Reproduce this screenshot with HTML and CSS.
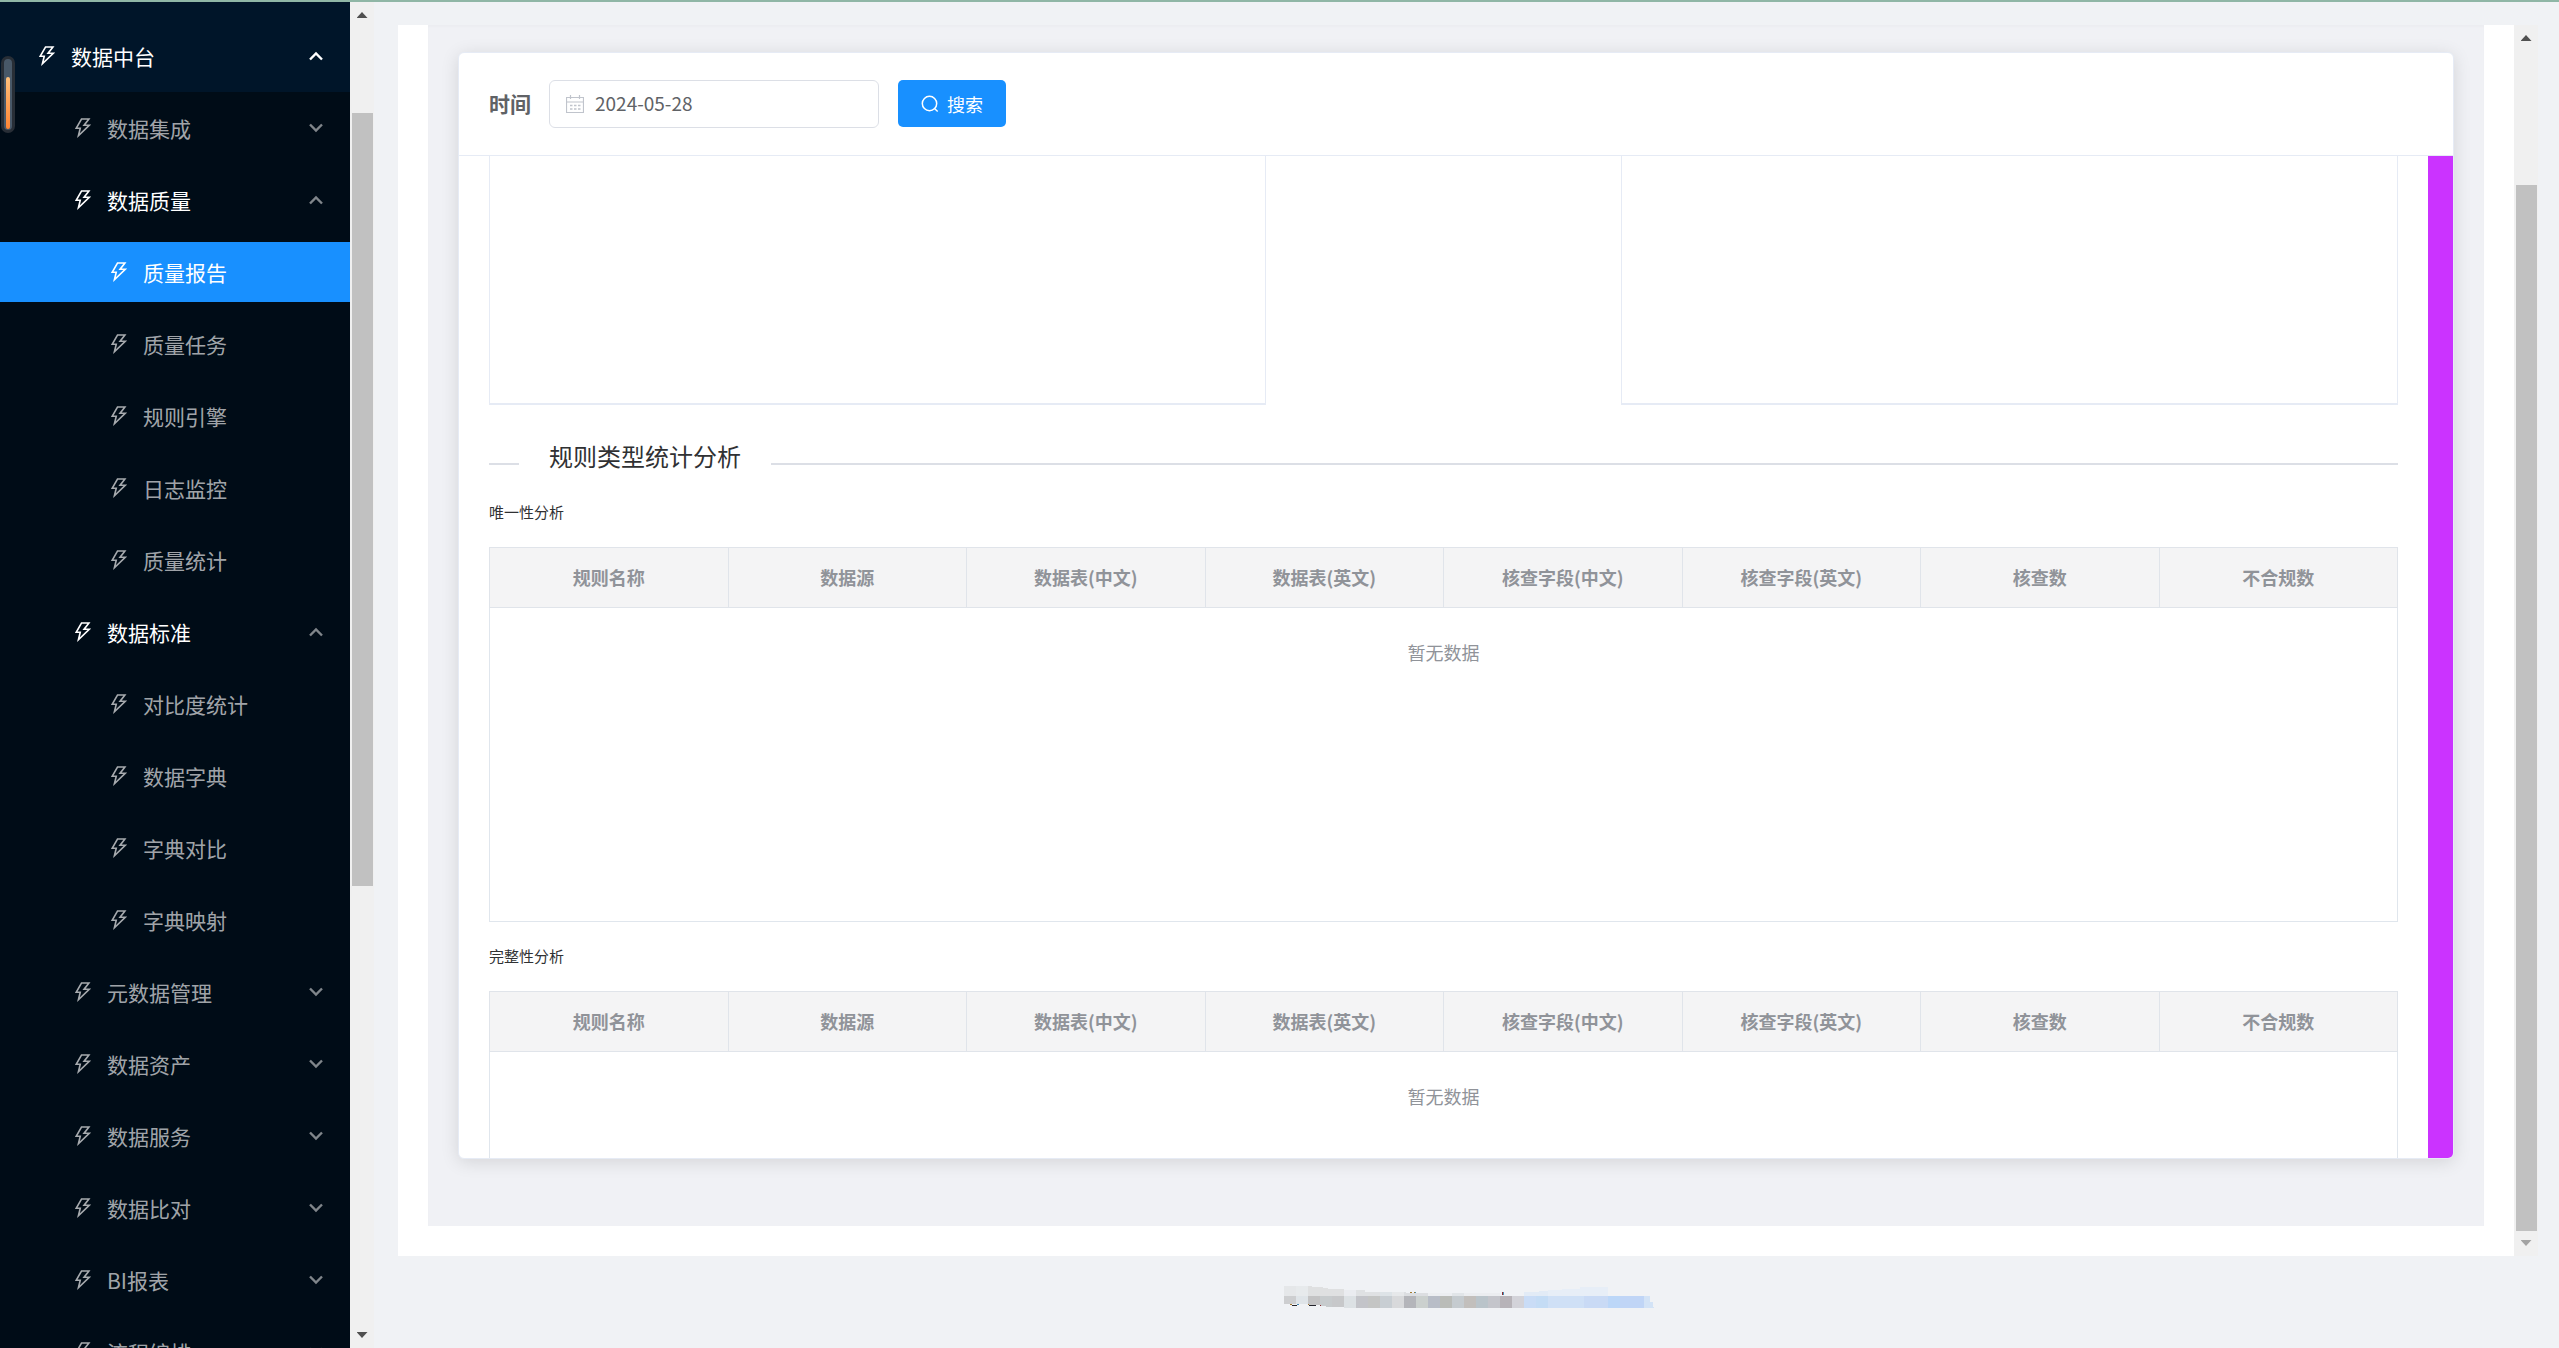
FILE: index.html
```html
<!DOCTYPE html>
<html lang="zh-CN">
<head>
<meta charset="utf-8">
<meta name="viewport" content="width=device-width, initial-scale=1">
<title>质量报告</title>
<link rel="stylesheet" href="styles.css">
</head>
<body>
<svg class="defs" aria-hidden="true">
  <symbol id="bolt" viewBox="0 0 1024 1024"><path d="M848 359.3H627.7L825.8 109c4.1-5.3.4-13-6.3-13H436c-2.8 0-5.5 1.5-6.9 4L170 547.5c-3.1 5.3.7 12 6.9 12h174.4l-89.4 357.6c-1.9 7.8 7.5 13.3 13.3 7.7L853.5 373c5.2-4.9 1.7-13.7-5.5-13.7zM378.2 732.5l60.3-241H281.1l189.6-327.4h224.6L487 427.4h211L378.2 732.5z"/></symbol>
  <symbol id="down" viewBox="0 0 14 10"><path d="M1 1.5l6 6 6-6" fill="none" stroke="currentColor" stroke-width="2.4"/></symbol>
  <symbol id="up" viewBox="0 0 14 10"><path d="M1 8.5l6-6 6 6" fill="none" stroke="currentColor" stroke-width="2.4"/></symbol>
</svg>
<div class="app">
  <nav class="sidebar" aria-label="主菜单">
    <button class="item root open" type="button"><svg class="bolt"><use href="#bolt"/></svg>数据中台<svg class="chev"><use href="#up"/></svg></button>
    <div class="sub">
      <button class="item" type="button"><svg class="bolt"><use href="#bolt"/></svg>数据集成<svg class="chev"><use href="#down"/></svg></button>
      <button class="item open" type="button"><svg class="bolt"><use href="#bolt"/></svg>数据质量<svg class="chev"><use href="#up"/></svg></button>
      <div class="leafs">
        <a class="item active" href="#report"><svg class="bolt"><use href="#bolt"/></svg>质量报告</a>
        <a class="item" href="#task"><svg class="bolt"><use href="#bolt"/></svg>质量任务</a>
        <a class="item" href="#rule"><svg class="bolt"><use href="#bolt"/></svg>规则引擎</a>
        <a class="item" href="#log"><svg class="bolt"><use href="#bolt"/></svg>日志监控</a>
        <a class="item" href="#stat"><svg class="bolt"><use href="#bolt"/></svg>质量统计</a>
      </div>
      <button class="item open" type="button"><svg class="bolt"><use href="#bolt"/></svg>数据标准<svg class="chev"><use href="#up"/></svg></button>
      <div class="leafs">
        <a class="item" href="#contrast"><svg class="bolt"><use href="#bolt"/></svg>对比度统计</a>
        <a class="item" href="#dict"><svg class="bolt"><use href="#bolt"/></svg>数据字典</a>
        <a class="item" href="#dict-compare"><svg class="bolt"><use href="#bolt"/></svg>字典对比</a>
        <a class="item" href="#dict-map"><svg class="bolt"><use href="#bolt"/></svg>字典映射</a>
      </div>
      <button class="item" type="button"><svg class="bolt"><use href="#bolt"/></svg>元数据管理<svg class="chev"><use href="#down"/></svg></button>
      <button class="item" type="button"><svg class="bolt"><use href="#bolt"/></svg>数据资产<svg class="chev"><use href="#down"/></svg></button>
      <button class="item" type="button"><svg class="bolt"><use href="#bolt"/></svg>数据服务<svg class="chev"><use href="#down"/></svg></button>
      <button class="item" type="button"><svg class="bolt"><use href="#bolt"/></svg>数据比对<svg class="chev"><use href="#down"/></svg></button>
      <button class="item" type="button"><svg class="bolt"><use href="#bolt"/></svg>BI报表<svg class="chev"><use href="#down"/></svg></button>
      <button class="item" type="button"><svg class="bolt"><use href="#bolt"/></svg>流程编排<svg class="chev"><use href="#down"/></svg></button>
    </div>
  </nav>
  <div class="scroll scroll-side" aria-hidden="true">
    <i class="arrow arrow-up"></i>
    <div class="track"><span class="before-side"></span><span class="thumb thumb-side"></span><span class="after-side"></span></div>
    <i class="arrow arrow-down"></i>
  </div>

  <div class="content">
    <div class="frame">
      <main class="panel">
        <div class="well">
          <section class="card">
            <form class="filter">
              <label class="filter-label" for="date">时间</label>
              <span class="date">
                <svg class="cal" viewBox="0 0 18 18" fill="none" stroke="#c0c4cc"><path d="M.5 2.5h17v15H.5zM.5 7h17M4.5 0v4M13.500 0v4" stroke-width="1.2"/><path d="M4 10.500h2.500M8 10.500h2.500M12 10.500h2.500M4 14h2.500M8 14h2.500M12 14h2.500" stroke-width="1.600"/></svg>
                <input id="date" type="text" value="2024-05-28">
              </span>
              <button class="search" type="button"><svg class="lens" viewBox="0 0 18 18" fill="none" stroke="#fff" stroke-width="1.500"><circle cx="8.500" cy="8.500" r="7.200"/><path d="M13.500 13.500l3.200 3"/></svg>搜索</button>
            </form>
            <div class="card-body">
              <div class="report">
                <div class="charts"><div class="chart"></div><div class="chart"></div></div>
                <h2 class="divider"><span>规则类型统计分析</span></h2>
                <h3 class="caption">唯一性分析</h3>
                <table class="grid">
                  <thead><tr><th>规则名称</th><th>数据源</th><th>数据表(中文)</th><th>数据表(英文)</th><th>核查字段(中文)</th><th>核查字段(英文)</th><th>核查数</th><th>不合规数</th></tr></thead>
                  <tbody><tr><td colspan="8">暂无数据</td></tr></tbody>
                </table>
                <h3 class="caption">完整性分析</h3>
                <table class="grid">
                  <thead><tr><th>规则名称</th><th>数据源</th><th>数据表(中文)</th><th>数据表(英文)</th><th>核查字段(中文)</th><th>核查字段(英文)</th><th>核查数</th><th>不合规数</th></tr></thead>
                  <tbody><tr><td colspan="8">暂无数据</td></tr></tbody>
                </table>
              </div>
              <div class="purple-bar"></div>
            </div>
          </section>
        </div>
      </main>
      <div class="scroll scroll-main" aria-hidden="true">
        <i class="arrow arrow-up"></i>
        <div class="track"><span class="before-main"></span><span class="thumb thumb-main"></span></div>
        <i class="arrow arrow-down faded"></i>
      </div>
    </div>
    <footer class="footer">
      <svg class="mosaic" viewBox="0 0 370 22" shape-rendering="crispEdges" aria-hidden="true">
        <path fill="#e5e7e9" d="M0 0h12v10H0z"/><path fill="#e7eaec" d="M12 0h12v10H12z"/>
        <path fill="#dfe0e1" d="M24 0h4v1h11v1h5v1h16v7H24z"/><path fill="#eaecf0" d="M60 4h12v6H60z"/>
        <path fill="#dfe1e3" d="M72 4h9v2h15v4H72z"/><path fill="#dde3e7" d="M96 6h12v4H96z"/><path fill="#e6e8ea" d="M108 6h12v4h-12z"/>
        <path fill="#dcdee1" d="M120 6h2v1h22v3h-24z"/><path fill="#eceef1" d="M144 7h24v3h-24z"/><path fill="#e1e5e8" d="M168 7h12v3h-12z"/><path fill="#ebedf0" d="M180 7h36v3h-36z"/>
        <path fill="#e2ebf6" d="M240 6h15v-1h9v5h-24z"/><path fill="#e7eef7" d="M264 4h14v-1h18v-2h28v9h-60z"/>
        <path fill="#cdced0" d="M0 10h12v8H0z"/><path fill="#dfe4e8" d="M12 10h12v8H12z"/><path fill="#c3c3c4" d="M24 10h12v9H24z"/><path fill="#c7cbcd" d="M36 10h12v11h-6v-1h-6z"/><path fill="#c7c8ca" d="M48 10h12v11H48z"/>
        <path fill="#dce1e4" d="M60 10h12v12H60z"/><path fill="#c3c4c9" d="M72 10h12v12H72z"/><path fill="#c4c5c4" d="M84 10h12v12H84z"/><path fill="#c8ced3" d="M96 10h12v12H96z"/><path fill="#d8d9db" d="M108 10h12v12h-12z"/><path fill="#b4b5ba" d="M120 10h12v12h-12z"/><path fill="#cbd0ce" d="M132 10h12v12h-12z"/><path fill="#b8bdc7" d="M144 10h12v12h-12z"/><path fill="#babcb8" d="M156 10h12v12h-12z"/><path fill="#c5cbcf" d="M168 10h12v12h-12z"/><path fill="#c2bfbc" d="M180 10h12v12h-12z"/><path fill="#bac4ca" d="M192 10h12v12h-12z"/><path fill="#c4c5cb" d="M204 10h12v12h-12z"/><path fill="#b7b3b8" d="M216 10h12v12h-12z"/><path fill="#d3d3d9" d="M228 10h12v12h-12z"/>
        <path fill="#c9dcf6" d="M240 10h12v12h-12z"/><path fill="#c4dcf5" d="M252 10h12v12h-12z"/><path fill="#cfe0f6" d="M264 10h36v12h-36z"/><path fill="#c9daf5" d="M300 10h24v12h-24z"/><path fill="#bcd7f8" d="M324 10h12v12h-12z"/><path fill="#c0d5f6" d="M336 10h24v12h-24z"/><path fill="#d3e3f6" d="M360 10h6v6h3v5h1v1h-10z"/>
        <path fill="#23242c" d="M8 19h5v1H8zM25 19h7v1h-7z"/><path fill="#a5792e" d="M6 18h2v1H6zM24 18h1v1h-1zM126 6h2v1h-2zM130 6h1v1h-1z"/><path fill="#4a90b5" d="M13 18h2v1h-2zM131 6h1v1h-1zM219 6h1v3h-1z"/><path fill="#8e2c30" d="M218 6h1v3h-1zM36 19h1v1h-1z"/>
      </svg>
    </footer>
  </div>
</div>
<div class="gauge" aria-hidden="true"><div class="gauge-fill"></div></div>
</body>
</html>
```
FILE: styles.css
```css
* { box-sizing: border-box; }

body {
  margin: 0;
  height: 100vh;
  overflow: hidden;
  border-top: 2px solid #8fb6a6;
  background: #f0f2f5;
  color: #303133;
  font: 18px/24px "Noto Sans CJK SC", "Noto Sans", sans-serif;
}

button, input { font-family: inherit; }
.defs { display: none; }

.app { display: flex; height: 100%; }

/* Sidebar */
.sidebar {
  flex: none;
  width: 350px;
  padding-top: 18px;
  overflow: hidden;
  background: #001529;
}
.sub { background: #000c17; overflow: hidden; }
.item {
  display: flex;
  align-items: center;
  gap: 12px;
  width: 100%;
  height: 60px;
  margin: 6px 0 12px;
  padding: 0 27px 0 71px;
  border: 0;
  background: none;
  color: rgba(255, 255, 255, .65);
  font-size: 21px;
  line-height: 32px;
  text-align: left;
  text-decoration: none;
}
.item.root { margin-bottom: 6px; padding-left: 35px; }
.leafs .item { padding-left: 107px; }
.item.open, .item.active { color: #fff; }
.item.active { background: #1890ff; }
.bolt { flex: none; width: 24px; height: 24px; fill: currentColor; }
.chev { width: 14px; height: 10px; margin-left: auto; color: rgba(255, 255, 255, .5); }
.root .chev { color: #fff; }

/* Scrollbars */
.scroll {
  display: flex;
  flex: none;
  flex-direction: column;
  align-items: center;
  width: 24px;
  background: #f0f0f0;
}
.track { display: flex; flex: 1; flex-direction: column; width: 21px; }
.thumb { background: #c1c1c1; }
.before-side { flex: 88; }
.thumb-side { flex: 774; }
.after-side { flex: 438; }
.before-main { flex: 137; }
.thumb-main { flex: 1046; }
.arrow { width: 11px; height: 6px; background: #505050; }
.arrow-up { margin: 10px 0 7px; clip-path: polygon(50% 0, 100% 100%, 0 100%); }
.arrow-down { margin: 9px 0 10px; clip-path: polygon(0 0, 100% 0, 50% 100%); }
.arrow.faded { background: #a3a3a3; }

/* Main area */
.content { display: flex; flex: 1; flex-direction: column; min-width: 0; padding: 23px 21px 0 24px; }
.frame { display: flex; flex: 1; min-height: 0; }
.panel { display: flex; flex: 1; min-width: 0; padding: 0 30px 30px; background: #fff; }
.well {
  display: flex;
  flex: 1;
  min-width: 0;
  padding: 27px 30px 67px;
  background: #f0f1f5;
  box-shadow: inset 0 2px 2px rgba(0, 0, 0, .02);
}
.card {
  display: flex;
  flex: 1;
  flex-direction: column;
  min-width: 0;
  overflow: hidden;
  border: 1px solid #e6ebf5;
  border-radius: 6px;
  background: #fff;
  box-shadow: 0 3px 18px rgba(0, 0, 0, .12);
}
.filter {
  display: flex;
  flex: none;
  align-items: flex-start;
  height: 103px;
  padding: 27px 30px 0;
  border-bottom: 1px solid #e6ebf5;
}
.filter-label { width: 60px; color: #606266; font-size: 21px; font-weight: 700; line-height: 46px; }
.date {
  display: flex;
  align-items: center;
  gap: 11px;
  width: 330px;
  height: 48px;
  padding: 0 16px;
  border: 1px solid #dcdfe6;
  border-radius: 6px;
}
.cal { flex: none; width: 18px; height: 18px; }
.date input {
  flex: 1;
  min-width: 0;
  padding: 0 0 2px;
  border: 0;
  outline: 0;
  background: none;
  color: #606266;
  font-size: 19px;
  line-height: 32px;
}
.search {
  display: flex;
  align-items: center;
  justify-content: center;
  gap: 8px;
  width: 108px;
  height: 47px;
  margin-left: 19px;
  padding: 0;
  border: 0;
  border-radius: 5px;
  background: #1890ff;
  color: #fff;
  font-size: 18px;
}
.lens { width: 18px; height: 18px; }

.card-body { display: flex; flex: 1; min-height: 0; overflow: hidden; }
.report { flex: 1; min-width: 0; padding: 0 30px; }
.purple-bar { flex: none; width: 25px; background: #cb33ff; }

.charts { display: flex; justify-content: space-between; }
.chart { width: 777px; max-width: 45%; height: 249px; border: 1px solid #e6ebf5; border-width: 0 1px 2px; }

.divider {
  display: grid;
  grid-template-columns: 30px auto 1fr;
  gap: 30px;
  margin: 33px 0 26px;
  color: #303133;
  font-size: 24px;
  font-weight: 400;
  line-height: 36px;
}
.divider::before, .divider::after { content: ""; height: 2px; margin-top: 25px; background: #dcdfe6; }
.caption { margin: 22px 0 23px; font-size: 15px; font-weight: 400; line-height: 24px; }

.grid {
  width: 100%;
  height: 375px;
  table-layout: fixed;
  border-collapse: collapse;
  border: 1px solid #e0e6ed;
  color: #909399;
}
.grid th { height: 60px; padding: 0 0 2px; border: 1px solid #e0e4ea; background: #f4f4f5; font-weight: 700; }
.grid td { padding: 32px 0 0; text-align: center; vertical-align: top; }

.footer { display: flex; flex: none; height: 92px; padding: 30px 0 0 2px; justify-content: center; }
.mosaic { width: 370px; height: 22px; }

/* Floating level gauge on the window edge */
.gauge {
  position: absolute;
  top: 56px;
  left: 1px;
  width: 14px;
  height: 77px;
  padding: 18px 2px 0;
  border: 3px solid #282e36;
  border-radius: 7px;
  background: #485868;
}
.gauge-fill { height: 52px; border-radius: 2px; background: linear-gradient(#fdbf7b, #ff8534); }
```
